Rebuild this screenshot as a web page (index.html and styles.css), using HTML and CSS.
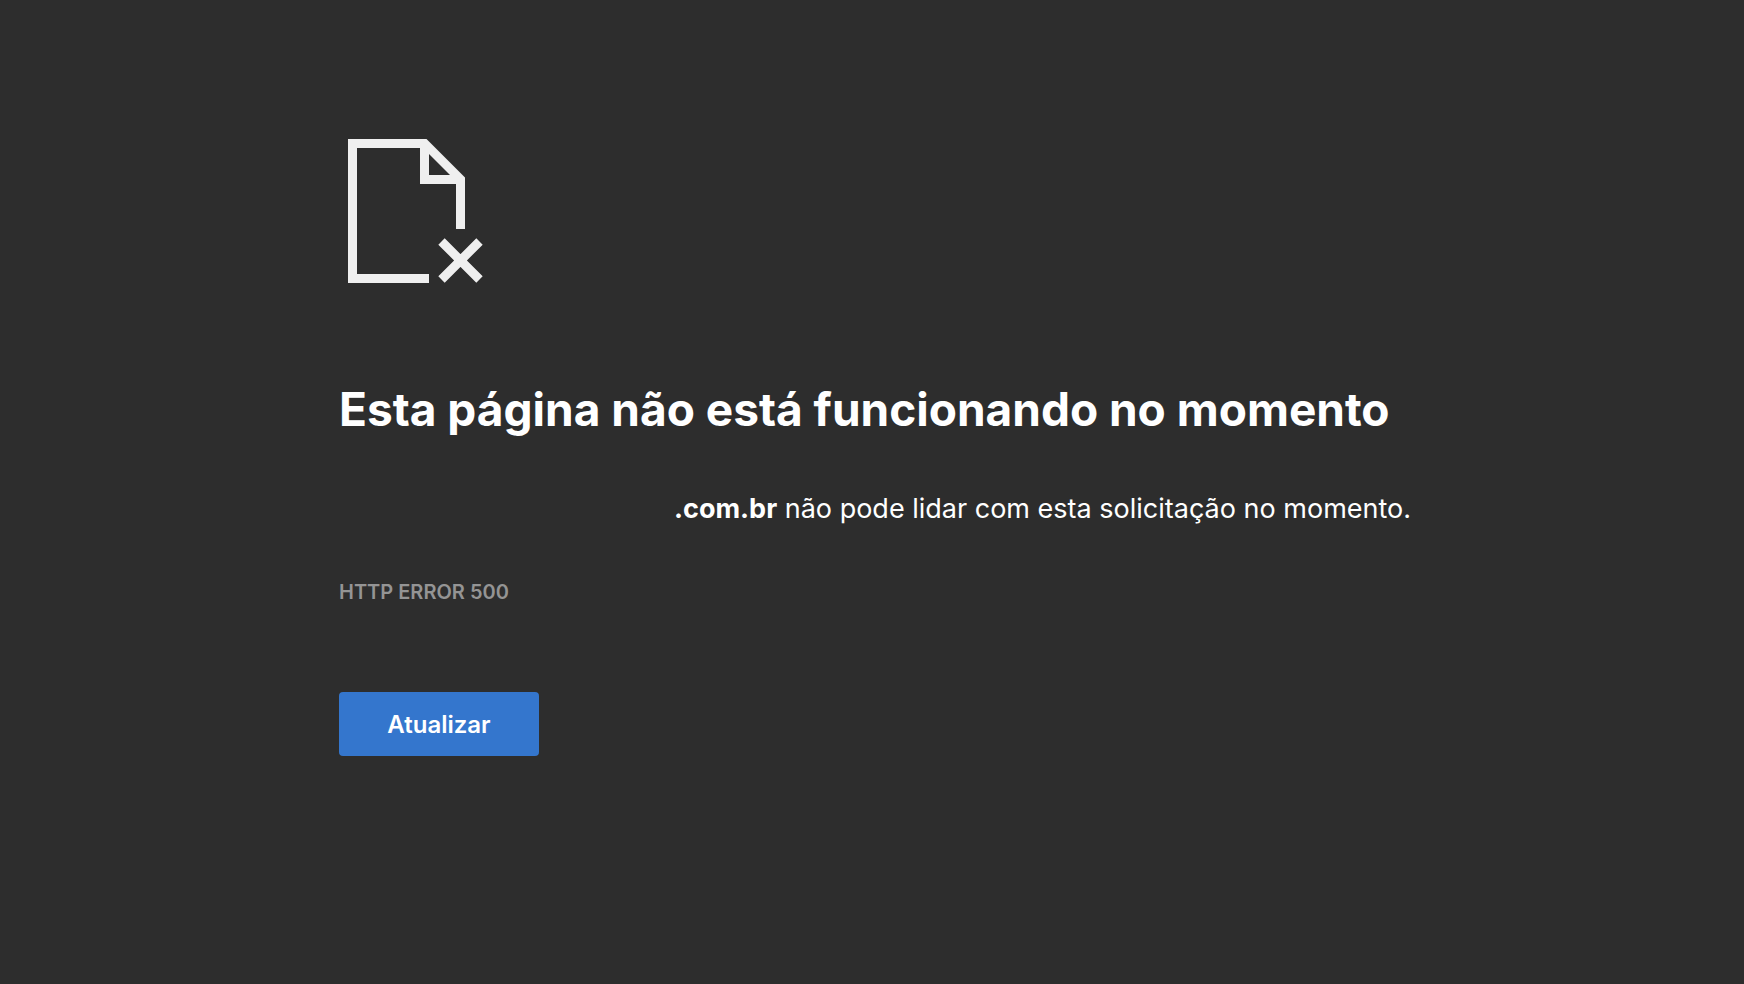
FILE: index.html
```html
<!DOCTYPE html>
<html lang="pt-BR">
<head>
<meta charset="utf-8">
<title>Esta página não está funcionando no momento</title>
<link rel="stylesheet" href="styles.css">
</head>
<body>
<main class="error-page">
  <svg class="error-icon" viewBox="0 0 144 144" aria-hidden="true">
    <path fill-rule="evenodd" d="M9 0H87.500L126 38.500V90H117V45H81V9H18V135H90V144H9ZM90 15V36H111Z"/>
    <path d="M102.500 102.500L140.500 140.500M140.500 102.500L102.500 140.500" stroke="#efefef" stroke-width="9"/>
  </svg>
  <h1 class="error-title">Esta página não está funcionando no momento</h1>
  <p class="error-summary"><span class="host-blank"></span><strong>.com.br</strong> não pode lidar com esta solicitação no momento.</p>
  <p class="error-code">HTTP ERROR 500</p>
  <button class="reload-button" type="button">Atualizar</button>
</main>
</body>
</html>
```

FILE: styles.css
```css
body {
  margin: 0;
  background: #2d2d2d;
  color: #fff;
  font-family: Inter, "Liberation Sans", sans-serif;
}

.error-page {
  display: flex;
  flex-direction: column;
  align-items: flex-start;
  max-width: 1120px;
  margin-left: 339px;
  padding-top: 139px;
}

.error-icon {
  width: 144px;
  height: 144px;
  fill: #efefef;
}

.error-title {
  margin: 96px 0 0;
  font-size: 46px;
  line-height: 60px;
  font-weight: 700;
}

.error-summary {
  margin: 50px 0 0;
  font-size: 27px;
  line-height: 40px;
}

.host-blank {
  display: inline-block;
  width: 335px;
}

.error-code {
  margin: 49px 0 0;
  color: #949494;
  font-size: 20px;
  line-height: 28px;
  font-weight: 600;
}

.reload-button {
  min-width: 200px;
  height: 64px;
  margin-top: 86px;
  padding: 0 48px;
  border: 0;
  border-radius: 4px;
  background: #3476cd;
  color: #fff;
  font-family: inherit;
  font-size: 24px;
  font-weight: 600;
}
```
